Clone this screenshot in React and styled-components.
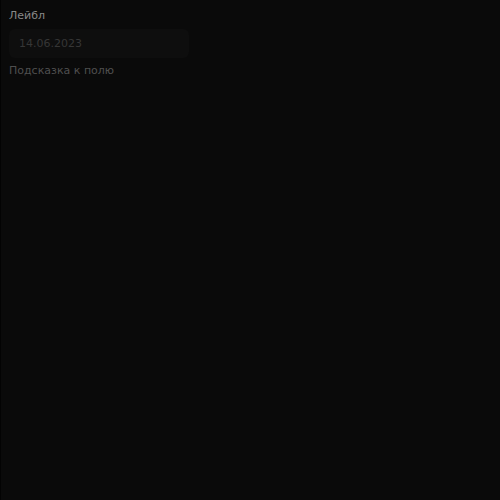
import React from "react";
import styled, { createGlobalStyle } from "styled-components";

const GlobalStyle = createGlobalStyle`
  html, body {
    margin: 0;
    padding: 0;
    background: #0a0a0a;
  }
  body {
    font-family: "DejaVu Sans", Verdana, sans-serif;
  }
`;

const Page = styled.div`
  min-height: 500px;
  box-sizing: border-box;
  border-left: 1px solid #030303;
  padding: 9px 8px 8px;
`;

const Field = styled.div`
  display: flex;
  flex-direction: column;
  width: 180px;
`;

const Label = styled.label`
  font-size: 11px;
  line-height: 14px;
  color: #888888;
  margin-bottom: 6px;
`;

const Input = styled.input`
  box-sizing: border-box;
  height: 29px;
  width: 180px;
  border: none;
  outline: none;
  border-radius: 6px;
  background: #0e0e0e;
  color: #363636;
  font-family: inherit;
  font-size: 11px;
  padding: 0 10px;
`;

const Hint = styled.span`
  font-size: 11px;
  line-height: 14px;
  color: #4f4f4f;
  margin-top: 6px;
`;

export default function App() {
  return (
    <>
      <GlobalStyle />
      <Page>
        <Field>
          <Label>Лейбл</Label>
          <Input defaultValue="14.06.2023" readOnly />
          <Hint>Подсказка к полю</Hint>
        </Field>
      </Page>
    </>
  );
}
